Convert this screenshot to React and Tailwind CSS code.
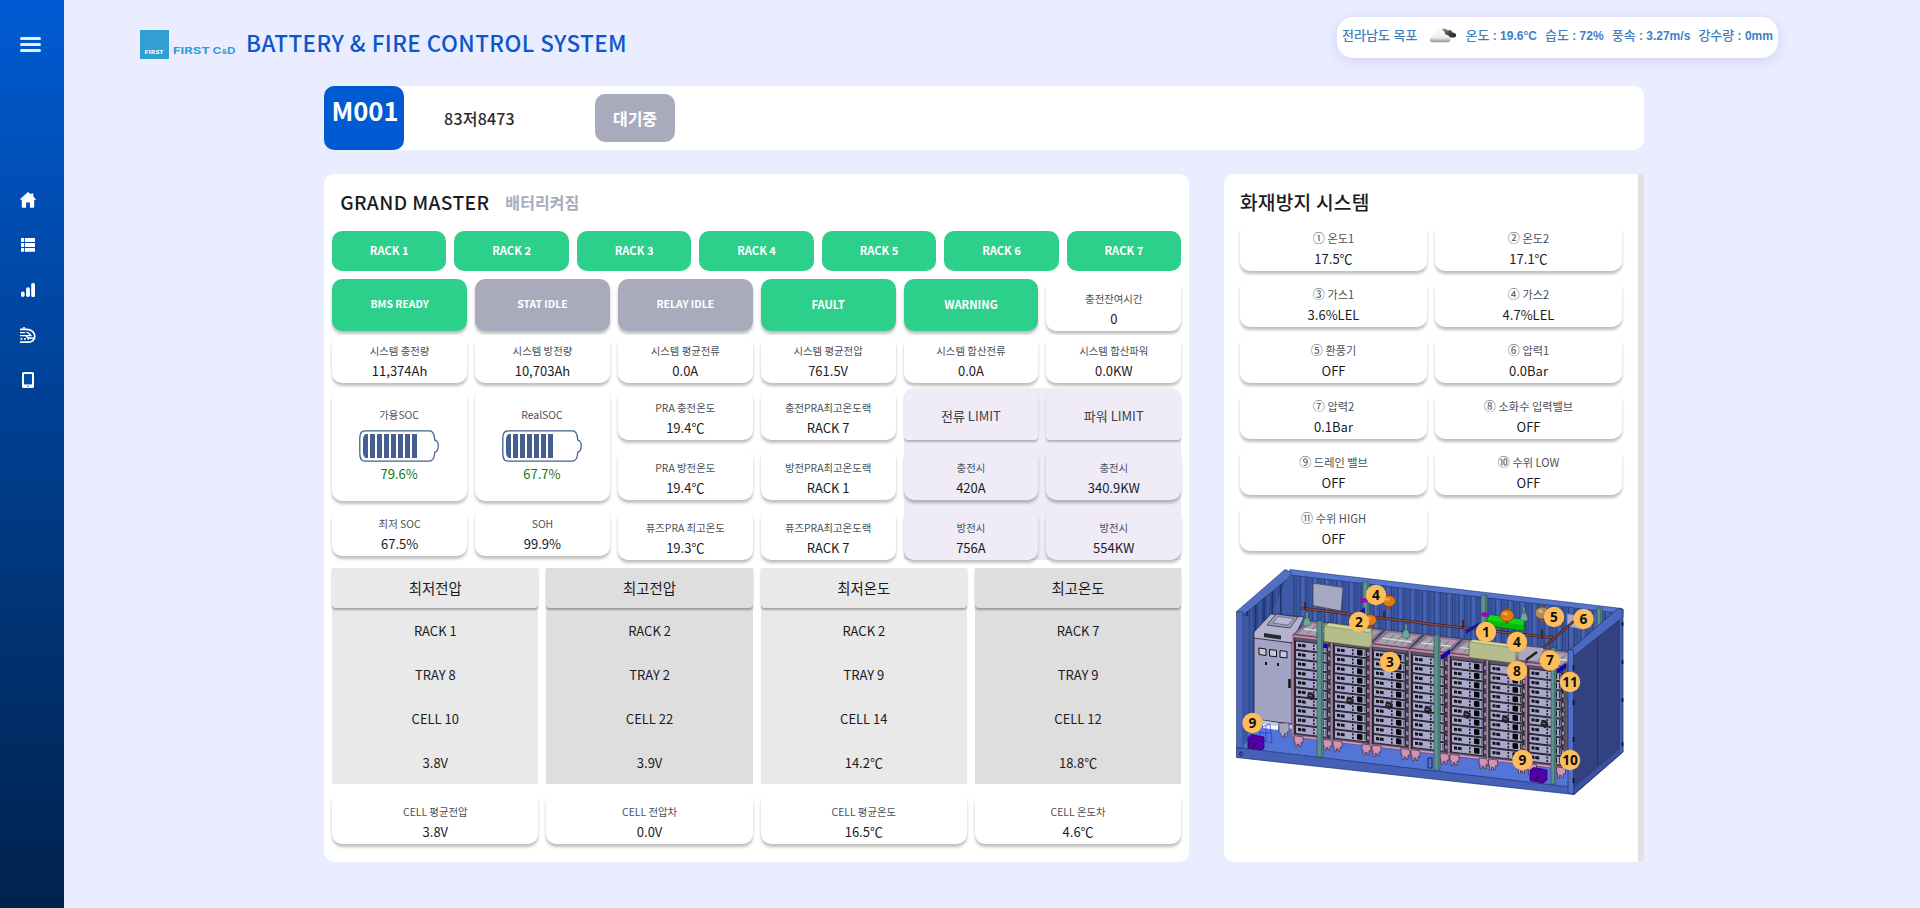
import React from "react";

const LINE_Y = (x) => 0.119 * (x - 1296);

function HomeIcon() {
  return (
    <svg width="16" height="16" viewBox="0 0 16 16" fill="#fff">
      <path d="M8 0 .2 6.9c-.3.4 0 .9.5.9h1.1v6.6c0 .8.5 1.4 1.3 1.4h3V10.600h3.800v5.200h3c.8 0 1.300-.6 1.300-1.400V7.800h1.100c.5 0 .8-.5.5-.9L13.300 4.400V1.500h-2.200v1Z" />
    </svg>
  );
}

function ListIcon() {
  return (
    <svg width="14" height="14" viewBox="0 0 14 14" fill="#fff">
      <path d="M0 0h3.200v3.900H0zM4 0h10v3.900H4zM0 4.900h3.200v4H0zM4 4.900h10v4H4zM0 9.900h3.200v3.800H0zM4 9.900h10v3.800H4z" />
    </svg>
  );
}

function BarsIcon() {
  return (
    <svg width="14" height="14" viewBox="0 0 14 14" fill="#fff">
      <rect x="0" y="8.500" width="3.600" height="5.500" rx="1.800" />
      <rect x="5.100" y="4.300" width="3.800" height="9.700" rx="1.800" />
      <rect x="10.200" y="0" width="3.800" height="14" rx="1.500" />
    </svg>
  );
}

function TrainIcon() {
  return (
    <svg width="16" height="16" viewBox="0 0 16 16" fill="none" stroke="#fff" strokeWidth="1.700">
      <path d="M4 0v2" />
      <path d="M0 2.300h6.500c5 0 8.300 3.500 8.300 7 0 3.500-3 5.800-6 5.800H0" />
      <path d="M0 5.600h5M0 8.600h10.800c-1-2-2.200-3.200-4.500-3.200M6 9c1 1.500 3 2.200 5.200 2.200h3.600" strokeWidth="1.400" />
      <path d="M.5 11.900h1.800M4 11.900h1.800M7.500 11.900h1.600" />
    </svg>
  );
}

function PhoneIcon() {
  return (
    <svg width="12" height="16" viewBox="0 0 12 16">
      <rect width="12" height="16" rx="1.600" fill="#fff" />
      <rect x="2" y="2" width="8" height="10.400" fill="#004aa8" />
      <circle cx="6" cy="14.200" r=".8" fill="#004aa8" />
    </svg>
  );
}

function Sidebar() {
  return (
    <aside className="flex h-full w-16 shrink-0 flex-col bg-linear-to-b from-[#005bd3] to-[#00224d]">
      <div className="flex flex-col gap-[3px] pt-[37px] pl-5">
        <span className="h-[3px] w-[21px] rounded-full bg-[#e6efff]" />
        <span className="h-[3px] w-[21px] rounded-full bg-[#e6efff]" />
        <span className="h-[3px] w-[21px] rounded-full bg-[#e6efff]" />
      </div>
      <nav className="mt-[125px] flex w-14 flex-col">
        {[HomeIcon, ListIcon, BarsIcon, TrainIcon, PhoneIcon].map((Icon, i) => (
          <a key={i} className="flex h-[45px] items-center justify-center">
            <Icon />
          </a>
        ))}
      </nav>
    </aside>
  );
}

function Logo() {
  return (
    <svg width="98" height="29" viewBox="0 0 98 29">
      <rect width="29" height="29" fill="#319fd3" />
      <text x="4.500" y="24" textLength="19" lengthAdjust="spacingAndGlyphs" fontSize="5.400" fontWeight="700" fontFamily="Open Sans, sans-serif" fill="#fff">FIRST</text>
      <g fontWeight="700" fontFamily="Inter, sans-serif" fill="#319fd3">
        <text x="33" y="23.700" fontSize="9.400" textLength="37" lengthAdjust="spacingAndGlyphs">FIRST</text>
        <text x="72.500" y="23.700" fontSize="9.400" textLength="9" lengthAdjust="spacingAndGlyphs">C</text>
        <text x="82" y="23.700" fontSize="6" textLength="5" lengthAdjust="spacingAndGlyphs">&amp;</text>
        <text x="87" y="23.700" fontSize="9.400" textLength="8.500" lengthAdjust="spacingAndGlyphs">D</text>
      </g>
    </svg>
  );
}

function CloudIcon() {
  return (
    <svg className="ml-1" width="28" height="15" viewBox="0 0 28 15">
      <defs>
        <linearGradient id="cloud" x1="0" y1="0" x2="0" y2="1">
          <stop offset="0" stopColor="#fff" />
          <stop offset=".65" stopColor="#ececec" />
          <stop offset="1" stopColor="#8d8d8d" />
        </linearGradient>
        <linearGradient id="dark" x1="0" y1="0" x2="1" y2="1">
          <stop offset="0" stopColor="#aaa" />
          <stop offset=".5" stopColor="#4a4a4a" />
          <stop offset="1" stopColor="#222" />
        </linearGradient>
      </defs>
      <path d="M12 3c0-2 3-3.500 5-2l2 1.500c2-1 4 0 4.500 2 2.500.2 4 1.500 3.500 3.500-.5 1.600-3 1.800-7 1.400Z" fill="url(#dark)" />
      <path d="M3 14.300C0 14 0 10 3 9c0-2 1.500-3 3-3 1-3.500 3-4.800 5.500-4.500 3 .3 4.500 2.500 4.500 5 3 .3 5 2 5.500 4.300.2 2.500-1 3.500-2.500 3.500Z" fill="url(#cloud)" stroke="#e6e6e6" strokeWidth=".4" />
    </svg>
  );
}

function Reading({ name, value }) {
  return (
    <span>
      <span className="text-[13px] font-medium">{name}</span> : {value}
    </span>
  );
}

function Battery({ bars }) {
  return (
    <svg width="80" height="32" viewBox="0 0 80 32">
      <path d="M6 .8h64.500c4 0 5 4 5.300 9.200l1.700.8c.4 0 .4.600.8 1.200 1.200.5 1.200 7 0 8-.4.800-.4 1.400-.8 1.400l-1.700.8c-.3 5-1.800 9-5.500 9H6c-4 0-5.200-2.500-5.200-8V9C.8 3.500 2 .8 6 .8Z" fill="#fff" stroke="#455f91" strokeWidth="1.300" />
      {Array.from({ length: bars }, (_, i) =>
        i === 0 ? (
          <path key={i} d="M9 4v24H7.500C5.500 28 4 25.500 4 22V10c0-3.500 1.500-6 3.500-6Z" fill="#455f91" />
        ) : (
          <rect key={i} x={4 + i * 7} y="4" width="5" height="24" fill="#455f91" />
        )
      )}
    </svg>
  );
}

const SHADOW = "shadow-[0_3px_3px_rgba(0,0,0,0.25)]";

function Stat({ label, value, mark, tone = "bg-white" }) {
  return (
    <div className={`flex h-full flex-col items-center justify-end rounded-[10px] pb-[2px] ${SHADOW} ${tone}`}>
      <span className={`leading-[19px] whitespace-pre text-[#4c5158] ${mark ? "text-[11.2px]" : "text-[10.4px]"}`}>
        {mark && <span className="font-['Noto_Sans_CJK_JP',sans-serif] text-[12px] leading-none">{mark} </span>}
        {label}
      </span>
      <span className="text-[13px] leading-[21px] text-[#1b1b1f]">{value}</span>
    </div>
  );
}

function StateButton({ label, tone, size }) {
  return (
    <div className={`flex h-[52px] items-center justify-center rounded-[10px] pb-0.5 font-bold text-white ${SHADOW} ${tone} ${size}`}>
      {label}
    </div>
  );
}

function SocCard({ label, value, bars }) {
  return (
    <div className={`flex h-[113px] flex-col items-center rounded-[10px] bg-white pt-[17px] pr-px ${SHADOW}`}>
      <span className="text-[10.4px] leading-5 text-[#4c5158]">{label}</span>
      <div className="mt-[5px]">
        <Battery bars={bars} />
      </div>
      <span className="mt-0.5 text-[13px] leading-5 text-[#12761b]">{value}</span>
    </div>
  );
}

const SYSTEM = [
  ["시스템 충전량", "11,374Ah"],
  ["시스템 방전량", "10,703Ah"],
  ["시스템 평균전류", "0.0A"],
  ["시스템 평균전압", "761.5V"],
  ["시스템 합산전류", "0.0A"],
  ["시스템 합산파워", "0.0KW"],
];

const PRA = [
  ["PRA 충전온도", "19.4℃"],
  ["충전PRA최고온도랙", "RACK 7"],
  ["PRA 방전온도", "19.4℃"],
  ["방전PRA최고온도랙", "RACK 1"],
  ["퓨즈PRA 최고온도", "19.3℃"],
  ["퓨즈PRA최고온도랙", "RACK 7"],
];

const LIMITS = [
  ["충전시", "420A"],
  ["충전시", "340.9KW"],
  ["방전시", "756A"],
  ["방전시", "554KW"],
];

const EXTREMES = [
  { title: "최저전압", rows: ["RACK 1", "TRAY 8", "CELL 10", "3.8V"], tone: "bg-[#e9e9e9]" },
  { title: "최고전압", rows: ["RACK 2", "TRAY 2", "CELL 22", "3.9V"], tone: "bg-[#dedede]" },
  { title: "최저온도", rows: ["RACK 2", "TRAY 9", "CELL 14", "14.2℃"], tone: "bg-[#e9e9e9]" },
  { title: "최고온도", rows: ["RACK 7", "TRAY 9", "CELL 12", "18.8℃"], tone: "bg-[#dedede]" },
];

const CELLS = [
  ["CELL 평균전압", "3.8V"],
  ["CELL 전압차", "0.0V"],
  ["CELL 평균온도", "16.5℃"],
  ["CELL 온도차", "4.6℃"],
];

const FIRE = [
  ["①", "온도1", "17.5℃"],
  ["②", "온도2", "17.1℃"],
  ["③", "가스1", "3.6%LEL"],
  ["④", "가스2", "4.7%LEL"],
  ["⑤", "환풍기", "OFF"],
  ["⑥", "압력1", "0.0Bar"],
  ["⑦", "압력2", "0.1Bar"],
  ["⑧", "소화수 입력밸브", "OFF"],
  ["⑨", "드레인 밸브", "OFF"],
  ["⑩", "수위 LOW", "OFF"],
  ["⑪", "수위 HIGH", "OFF"],
];

const MARKERS = [
  [4, 1376, 595], [2, 1359, 622], [3, 1390, 662], [9, 1252.500, 723], [1, 1486, 632],
  [4, 1517, 642], [5, 1554, 617], [6, 1583.5, 619], [7, 1550, 660.500], [8, 1517, 671],
  [11, 1570, 682], [9, 1522.500, 760], [10, 1570, 760],
];

function Rack({ x }) {
  const y = 641 + LINE_Y(x);
  return (
    <g transform={`translate(${x} ${y}) skewY(6.800)`}>
      <path d="M-3 -6 12 -22H49L35 -6Z" fill="#84788f" stroke="#2b2230" strokeWidth=".6" />
      <path d="M3 -8 15 -19H43L31 -8Z" fill="#9fa6ab" stroke="#c68aa9" strokeWidth="1.300" />
      <path d="M12 -9 20 -18M20 -9 28 -18M27 -9 36 -18" stroke="#55485c" strokeWidth=".7" />
      <path d="M8 -13h30" stroke="#e0e0e8" strokeWidth="1.200" />
      <rect x="-4" y="-5" width="40" height="101" fill="#5b5468" />
      <rect x="-3" y="-6" width="38" height="2.500" fill="#c98fb0" stroke="#3b2432" strokeWidth=".4" />
      <rect x="-4" y="-5" width="1.600" height="101" fill="#b27c9b" />
      <path d="M-1.500 -3v99M33 -3v99" stroke="#211c2a" strokeWidth=".9" />
      {Array.from({ length: 10 }, (_, i) => (
        <g key={i} transform={`translate(0 ${i * 9.350})`}>
          <rect x="31.500" y="2" width="3.500" height="4.500" fill="#8c89a6" stroke="#15131c" strokeWidth=".5" />
          <rect x="-.5" y="0" width="32" height="8.400" fill="#a9a8cc" stroke="#15131c" strokeWidth=".8" />
          <rect x="2" y="2.400" width="3" height="3" fill="#111" />
          <rect x="5.800" y="2.400" width="3.800" height="3" fill="#15131c" />
          <rect x="17" y="1.500" width="1.600" height="2" fill="#15131c" />
          <rect x="17" y="5" width="1.600" height="2" fill="#15131c" />
          <rect x="22" y="1.200" width="5.500" height="5.800" rx="1" fill="#08080b" />
          <path d="M30 1v6" stroke="#333" strokeWidth="1" />
        </g>
      ))}
      <path d="M12 49.500h4l2.500 2v4l-3 2-4.500-2Z" fill="#22222a" />
      <path d="M13 53h3" stroke="#888" strokeWidth="1" />
      <rect x="-4" y="94" width="40" height="2.500" fill="#d49abc" stroke="#3b2432" strokeWidth=".4" />
      {[-2, 27].map((f) => (
        <path key={f} d={`M${f} 95h9v6h-2v4h-2v-2h-2v3h-2v-5h-1Z`} fill="#cf93b4" stroke="#442b3a" strokeWidth=".7" />
      ))}
    </g>
  );
}

function Post({ x, y, h, w = 6 }) {
  return (
    <g>
      <rect x={x} y={y} width={w} height={h} fill="#5c918e" stroke="#2c4f4e" strokeWidth=".6" />
      <path d={`M${x + w - 1.500} ${y}v${h}`} stroke="#3f706e" strokeWidth="1" />
    </g>
  );
}

function Bell({ x, y }) {
  return (
    <g fill="#6fa79b" stroke="#29504a" strokeWidth=".5">
      <rect x={x - 1} y={y - 9} width="2" height="9" />
      <path d={`M${x - 2} ${y - 3}h4l2 6-1.500 2h-5l-1.500-2Z`} />
    </g>
  );
}

function Valve({ x, y, r = 5.500, tone = "#e07b14" }) {
  return (
    <g>
      <rect x={x - 1.500} y={y - r - 1.500} width="3" height={2 * r + 4} fill="#9c4e0a" />
      <ellipse cx={x} cy={y} rx={r + 1} ry={r} fill={tone} stroke="#6a3606" strokeWidth=".6" />
      <ellipse cx={x - 1.500} cy={y - 1.800} rx={r / 2.500} ry={r / 3.500} fill="#ffb866" opacity=".7" />
    </g>
  );
}

function ContainerDrawing() {
  return (
    <svg width="396" height="236" viewBox="1232 566 396 236">
      <path d="M1237 613 1286 570 1290 735 1237 750Z" fill="#2f4c93" />
      <path d="M1290 570 1622 609 1622 660 1570 700 1260 640Z" fill="#3d59a6" />
      {Array.from({ length: 11 }, (_, i) => {
        const x = 1243 + i * 4.200;
        const y = 611 - i * 3.650;
        return <path key={i} d={`M${x} ${y}V${740 - i * 2}`} stroke={i % 2 ? "#1d3168" : "#3f5ca8"} strokeWidth="1.500" />;
      })}
      {Array.from({ length: 53 }, (_, i) => {
        const x = 1294 + i * 6.100;
        const y = 575 + 0.118 * (x - 1290);
        return (
          <g key={i}>
            <path d={`M${x} ${y}v52`} stroke="#263b78" strokeWidth=".9" />
            <path d={`M${x + 2.500} ${y}v52`} stroke={i % 2 ? "#4a66b8" : "#334e94"} strokeWidth="1.800" />
          </g>
        );
      })}
      <path d="M1290 569.500 1622 608.500V613.500L1290 575Z" fill="#5476cf" stroke="#1f3269" strokeWidth=".6" />
      <path d="M1236 612 1285 569.500 1291 572V576L1242 616Z" fill="#5170c4" stroke="#1f3269" strokeWidth=".6" />
      <path d="M1238 748 1258 718 1572 755 1570 788Z" fill="#5574d8" />
      <path d="M1540 660 1570 664V762L1540 758Z" fill="#5b5468" />
      <path d="M1236.500 612h6.500V748h-6.500Z" fill="#4a68bb" stroke="#1f3269" strokeWidth=".6" />
      <path d="M1243 616h5.500V740l-5.500 6Z" fill="#3c569f" />
      <Post x={1363} y={582} h={36} />
      <Post x={1481} y={595} h={30} />
      <Post x={1597} y={608} h={22} w={5} />
      <path d="M1313 584 1316 583.500 1343 587.500 1341 611 1313 605.500Z" fill="#a6a8c4" stroke="#4b4d66" strokeWidth=".8" />
      <path d="M1567 613.500 1583 617V629.500L1567 626.500Z" fill="#a9abd2" stroke="#55587a" strokeWidth=".6" />
      <path d="M1301 608 1430 624 1556 638" stroke="#2e1612" strokeWidth="2.600" fill="none" />
      <path d="M1301 608 1430 624 1556 638" stroke="#94493f" strokeWidth="1.500" fill="none" />
      <path d="M1305 602v8M1384 611v7M1463 620v8M1542 629v10" stroke="#4a201b" strokeWidth="1.800" />
      <ellipse cx="1364" cy="600.500" rx="3.800" ry="2.200" fill="#a800b4" />
      <ellipse cx="1485" cy="614.500" rx="3.800" ry="2.200" fill="#a800b4" />
      <path d="M1466 634 1478 626 1480 622 1466 630ZM1360 611l5-4v7h-5Z" fill="#1414a4" />
      <path d="M1254 632 1271 614 1304 617 1292 643 1254 639Z" fill="#b3b3cf" stroke="#24242f" strokeWidth=".7" />
      <path d="M1267 625 1276 614 1298 617 1290 628Z" fill="#9d9dbb" stroke="#24242f" strokeWidth=".7" />
      <path d="M1273 623 1278 616.500 1294 618.500 1288 625Z" fill="#b8b8d4" stroke="#3b3b4a" strokeWidth=".5" />
      <path d="M1254 638 1292 643V724L1254 719Z" fill="#a3a3c5" stroke="#24242f" strokeWidth=".8" />
      <path d="M1264 633 1281 635.500V639.500L1264 637Z" fill="#2a2a35" />
      <path d="M1259 648 1266 649V655.500L1259 654.500ZM1269.500 649.500 1276.500 650.400V656.800L1269.500 656ZM1280 650.600 1287 651.500V658L1280 657.200Z" fill="#c6c6de" stroke="#111" strokeWidth="1" />
      <path d="M1266 662v3M1278 663v3" stroke="#111" strokeWidth="2" />
      <path d="M1289.500 679v9" stroke="#111" strokeWidth="2.500" />
      <path d="M1254 719 1292 725V729L1254 722Z" fill="#c5c5d8" />
      <path d="M1279 723h10v9h-2v5h-2v-4l-2 5-4-7Z" fill="#a7a7c4" stroke="#333" strokeWidth=".6" />
      {[1296, 1335, 1374, 1413, 1452, 1490.500, 1529.500].map((x) => (
        <Rack key={x} x={x} />
      ))}
      <path d="M1322 644h5v4h-5ZM1441 655l9-6v5l-9 6ZM1557 669l9-6v5l-9 6Z" fill="#0a0ab4" />
      <Bell x={1307} y={621} />
      <Bell x={1406} y={633} />
      <Post x={1317} y={621} h={136} />
      <Post x={1434} y={635} h={135} />
      <Post x={1551} y={648} h={136} w={5} />
      <path d="M1324 626 1329 623 1372 629 1372 645 1369 647.500 1324 641.500Z" fill="#b6bd8c" stroke="#545a35" strokeWidth=".7" />
      <path d="M1324 626 1329 623 1372 629 1369 632.500Z" fill="#cfd6a4" stroke="#545a35" strokeWidth=".4" />
      <path d="M1518 645 1545 648 1538 662 1518 660Z" fill="#aaa9bd" stroke="#444" strokeWidth=".6" />
      <path d="M1526 660 1537 652" stroke="#222" strokeWidth="2.500" />
      <path d="M1469 642 1473 639.500 1516 645V661L1512 663 1469 657.500Z" fill="#b6bd8c" stroke="#545a35" strokeWidth=".7" />
      <path d="M1469 642 1473 639.500 1516 645 1512 647.500Z" fill="#cfd6a4" stroke="#545a35" strokeWidth=".4" />
      <path d="M1487 620 1490 615 1525 620 1524 631 1487 626Z" fill="#08b80c" stroke="#065c08" strokeWidth=".7" />
      <path d="M1487 620 1490 615 1525 620 1522 625Z" fill="#12d918" />
      <path d="M1543 648 1574 621" stroke="#3a1613" strokeWidth="2.400" />
      <path d="M1543 648 1574 621" stroke="#8a453c" strokeWidth="1.200" />
      <Bell x={1524} y={616} />
      <Valve x={1389} y={601} />
      <Valve x={1370} y={620} />
      <Valve x={1507} y={615.500} r={6} />
      <Valve x={1542} y={613} r={6} tone="#a98d65" />
      <path d="M1263 724 1278 726V730L1263 728Z" fill="#fff" />
      <path d="M1260 728 1270 724 1272 743 1260 740ZM1260 733h12M1266 726v16" fill="none" stroke="#2038e8" strokeWidth=".7" />
      <path d="M1248 738 1251 734.500 1264 737V748L1261 750.500 1248 748.500Z" fill="#5200ae" stroke="#1e0048" strokeWidth=".7" />
      <path d="M1253 747l4-4" stroke="#111" strokeWidth="1.500" />
      <path d="M1236.500 747.500 1570 787 1574 794.500 1236.500 757.500Z" fill="#4461b6" stroke="#1f3269" strokeWidth=".7" />
      <path d="M1530 770 1534 767.500 1547 770V780L1543 783 1530 780.500Z" fill="#5200ae" stroke="#1e0048" strokeWidth=".7" />
      <path d="M1535 780l4-4" stroke="#111" strokeWidth="1.500" />
      <path d="M1428 758h4v10h-4Z" fill="none" stroke="#16234d" strokeWidth="1" />
      <path d="M1570 651 1623 609V752L1574 794.500Z" fill="#33427f" stroke="#1d2950" strokeWidth=".7" />
      <path d="M1597.500 637V774" stroke="#1d2950" strokeWidth=".8" />
      <path d="M1569 651 1618 608.500 1623 609.500V617L1574 656Z" fill="#4b68c0" stroke="#1f3269" strokeWidth=".7" />
      <path d="M1574 787 1623 745V752L1574 794.500Z" fill="#3b519c" stroke="#1f3269" strokeWidth=".5" />
      <path d="M1568 650h5.500V794l-5.500-1Z" fill="#4f6ec8" stroke="#1f3269" strokeWidth=".7" />
      <path d="M1620 612h2.500V752l-2.500 2Z" fill="#4460b0" />
      <path d="M1573.500 665v5M1573.500 700v5M1573.500 737v5M1573.500 778v5M1622.500 622v4M1622.500 660v4M1622.500 698v4M1622.500 742v4" stroke="#0c1022" strokeWidth="1.600" />
      <ellipse cx="1241" cy="754" rx="1.300" ry="2" fill="none" stroke="#111a3a" strokeWidth=".8" />
      {MARKERS.map(([n, x, y], i) => (
        <g key={i}>
          <circle cx={x} cy={y} r="10.200" fill="#ffbd59" />
          <text x={x} y={y + 4.900} textAnchor="middle" fontSize="13.700" fontWeight="700" fontFamily="Open Sans, sans-serif" fill="#111">{n}</text>
        </g>
      ))}
    </svg>
  );
}

function GrandMaster() {
  return (
    <section className="h-[688px] w-[865px] rounded-[10px] bg-white pr-[7.8px] pl-[8.2px]">
      <div className="flex h-[57px] items-center gap-4 pl-2">
        <h2 className="text-[19.200px] font-medium tracking-[0.38px] text-[#1b1b1f]">GRAND MASTER</h2>
        <span className="pb-0.5 text-[16px] font-bold tracking-[0.1px] text-[#a9abbf]">배터리켜짐</span>
      </div>
      <div className="-ml-[0.2px] grid grid-cols-7 gap-2">
        {[1, 2, 3, 4, 5, 6, 7].map((n) => (
          <div key={n} className="flex h-10 items-center justify-center rounded-[10px] bg-[#2dd08b] pb-px text-[11.200px] font-bold text-white">
            RACK {n}
          </div>
        ))}
      </div>
      <div className="mt-2 grid grid-cols-6 gap-x-2">
        <StateButton label="BMS READY" tone="bg-[#2dd08b]" size="text-[10.400px]" />
        <StateButton label="STAT IDLE" tone="bg-[#a9abbd]" size="text-[10.400px]" />
        <StateButton label="RELAY IDLE" tone="bg-[#a9abbd]" size="text-[10.400px]" />
        <StateButton label="FAULT" tone="bg-[#2dd08b]" size="text-[11.200px]" />
        <StateButton label="WARNING" tone="bg-[#2dd08b]" size="text-[11.200px]" />
        <Stat label="충전잔여시간" value="0" />
        {SYSTEM.map(([l, v]) => (
          <div key={l} className="mt-1 h-12">
            <Stat label={l} value={v} />
          </div>
        ))}
      </div>
      <div className="mt-[5px] grid h-[172px] grid-cols-3 gap-x-2">
        <div className="grid grid-cols-2 content-start gap-x-2 gap-y-[7px]">
          <SocCard label="가용SOC" value="79.6%" bars={8} />
          <SocCard label="RealSOC" value="67.7%" bars={7} />
          <div className="h-12"><Stat label="최저 SOC" value="67.5%" /></div>
          <div className="h-12"><Stat label="SOH" value="99.9%" /></div>
        </div>
        <div className="grid grid-cols-2 grid-rows-3 gap-2">
          {PRA.map(([l, v]) => (
            <Stat key={l} label={l} value={v} />
          ))}
        </div>
        <div className="grid grid-cols-2 grid-rows-3 gap-2 rounded-t-[10px] bg-[#efebf7]">
          {["전류 LIMIT", "파워 LIMIT"].map((t) => (
            <div key={t} className="flex items-center justify-center rounded-t-[10px] rounded-b-[4px] bg-[#efebf7] pt-[3px] text-[13px] text-[#3d3f47] shadow-[0_2px_2px_rgba(0,0,0,0.25)]">
              {t}
            </div>
          ))}
          {LIMITS.map(([l, v]) => (
            <Stat key={v} label={l} value={v} tone="bg-[#efebf7]" />
          ))}
        </div>
      </div>
      <div className="mt-2 grid grid-cols-4 gap-2">
        {EXTREMES.map(({ title, rows, tone }) => (
          <div key={title} className={`flex h-[216px] flex-col ${tone}`}>
            <div className="flex h-10 items-center justify-center rounded-b-[4px] text-[14.400px] text-[#1b1b1f] shadow-[0_2px_2px_rgba(0,0,0,0.3)]">
              {title}
            </div>
            {rows.map((r) => (
              <div key={r} className="flex h-11 items-center justify-center pt-0.5 text-[13px] text-[#1b1b1f]">
                {r}
              </div>
            ))}
          </div>
        ))}
        {CELLS.map(([l, v]) => (
          <div key={l} className="h-[52px]">
            <Stat label={l} value={v} />
          </div>
        ))}
      </div>
    </section>
  );
}

function FireSystem() {
  return (
    <section className="flex h-[688px] w-[420px] overflow-hidden rounded-l-[10px] rounded-r-[4px] bg-white">
      <div className="w-[414px] pl-4">
        <h2 className="h-[49px] pt-[14px] text-[19.200px] leading-7 font-medium tracking-[0.2px] text-[#1b1b1f]">화재방지 시스템</h2>
        <div className="grid w-[382px] auto-rows-[48px] grid-cols-2 gap-2">
          {FIRE.map(([m, l, v]) => (
            <Stat key={m} mark={m} label={l} value={v} />
          ))}
        </div>
        <div className="-ml-2 pt-[15px]">
          <ContainerDrawing />
        </div>
      </div>
      <div className="w-1.5 bg-[#e1e1e3]" />
    </section>
  );
}

export default function App() {
  return (
    <div className="flex h-[908px] w-full overflow-hidden bg-[#eaedff] font-['Noto_Sans_CJK_KR',sans-serif]">
      <Sidebar />
      <main className="flex-1">
        <header className="flex h-[86px] justify-between pr-[142px] pl-[76px]">
          <div className="flex items-start pt-[30px]">
            <Logo />
            <h1 className="-mt-[7px] ml-2 text-[22.400px] leading-[38px] font-medium tracking-[0.47px] whitespace-nowrap text-[#0b57cb]">BATTERY &amp; FIRE CONTROL SYSTEM</h1>
          </div>
          <div className="mt-[17px] flex h-[41px] w-[441px] items-center justify-between rounded-[16px] bg-white px-[5px] pb-1 font-['Liberation_Sans','Noto_Sans_CJK_KR',sans-serif] text-[12px] leading-[19px] font-bold whitespace-nowrap text-[#3f7fc4] shadow-[0_3px_12px_rgba(60,60,140,0.14)]">
            <span className="text-[13px] font-medium">전라남도 목포</span>
            <CloudIcon />
            <Reading name="온도" value="19.6°C" />
            <Reading name="습도" value="72%" />
            <Reading name="풍속" value="3.27m/s" />
            <Reading name="강수량" value="0mm" />
          </div>
        </header>
        <div className="ml-[260px] w-[1320px]">
          <div className="flex h-16 rounded-[10px] bg-white">
            <div className="h-16 w-20 rounded-[10px] bg-[#005bd3] pt-[5px] pl-0.5 text-center text-[25.600px] leading-[38px] font-bold text-white">M001</div>
            <div className="flex w-[151px] items-center justify-center text-[16px] font-medium tracking-[0.2px] text-[#2b2b30]">83저8473</div>
            <div className="mt-2 ml-10 flex h-12 w-20 items-center justify-center rounded-[10px] bg-[#a9abbd] text-[16px] font-bold text-white">대기중</div>
          </div>
          <div className="mt-6 flex justify-between">
            <GrandMaster />
            <FireSystem />
          </div>
        </div>
      </main>
    </div>
  );
}
